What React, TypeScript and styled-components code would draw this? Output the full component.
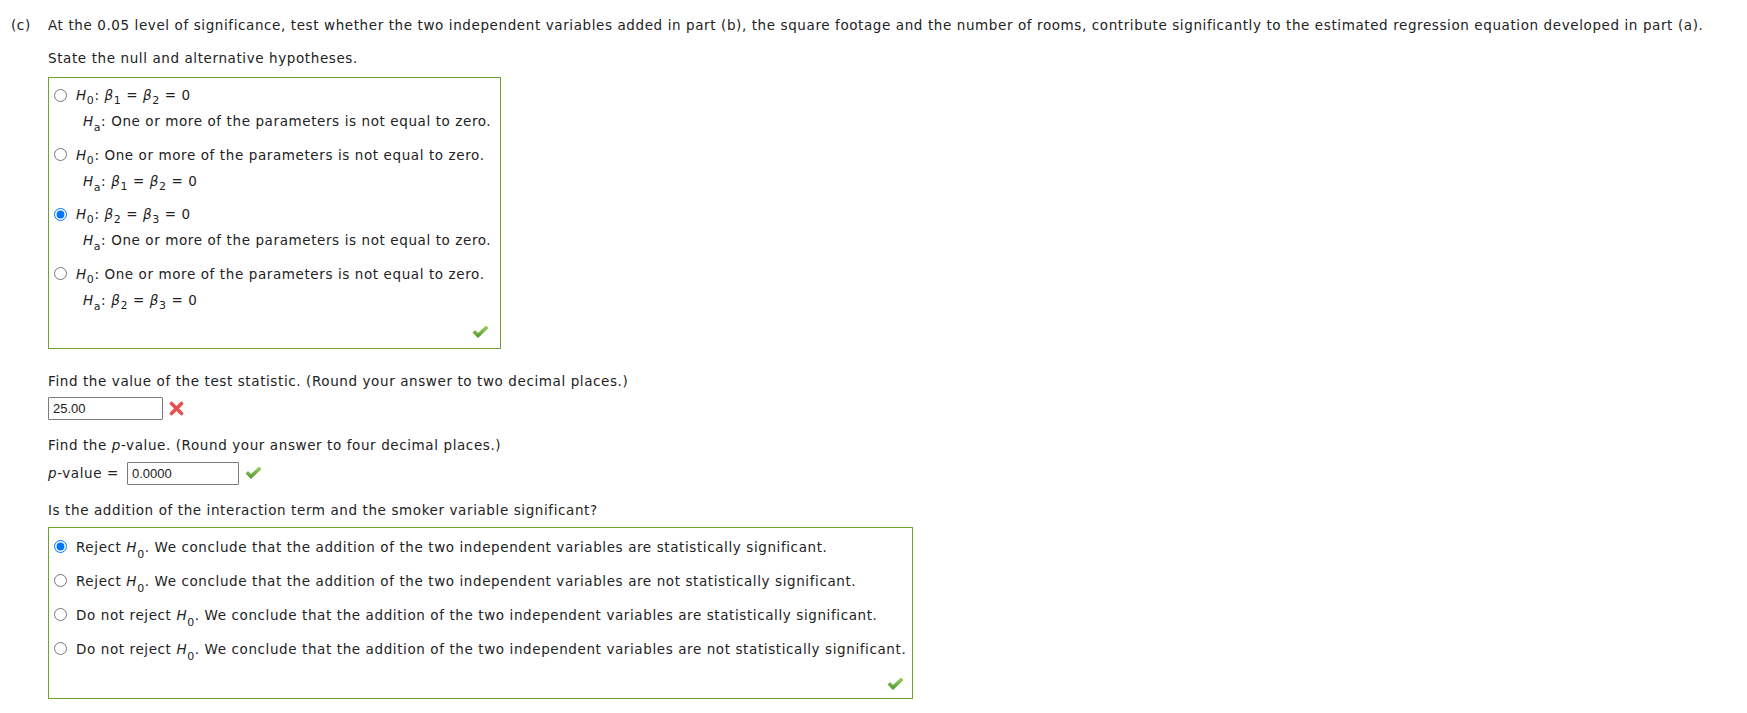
import React from "react";
import styled, { createGlobalStyle } from "styled-components";

const GlobalStyle = createGlobalStyle`
  html, body { margin: 0; padding: 0; background: #fff; }
  body {
    font-family: "DejaVu Sans", Verdana, sans-serif;
    font-size: 13.5px;
    letter-spacing: 0.6px;
    color: #222;
  }
`;

const Page = styled.div`
  display: flex;
  padding: 15px 0 0 11px;
`;

const PartLabel = styled.div`
  width: 37px;
  flex: none;
  line-height: 20px;
`;

const Content = styled.div`
  display: flex;
  flex-direction: column;
  align-items: flex-start;
`;

const Text = styled.div<{ $mt?: number }>`
  line-height: 20px;
  margin-top: ${(p) => p.$mt ?? 0}px;
  white-space: nowrap;
`;

const AnswerBox = styled.div<{ $mt: number; $pt: number; $pr: number }>`
  margin-top: ${(p) => p.$mt}px;
  border: 1px solid #6fa22e;
  display: flex;
  flex-direction: column;
  padding: ${(p) => p.$pt}px ${(p) => p.$pr}px 0 5px;
`;

const Option = styled.label<{ $lh: number; $gap: number }>`
  display: flex;
  align-items: flex-start;
  line-height: ${(p) => p.$lh}px;
  margin-bottom: ${(p) => p.$gap}px;
  white-space: nowrap;
  cursor: pointer;
`;

const Radio = styled.input.attrs({ type: "radio" })<{ $top: number }>`
  width: 13px;
  height: 13px;
  margin: ${(p) => p.$top}px 9px 0 0;
  flex: none;
`;

const Lines = styled.div`
  display: flex;
  flex-direction: column;
`;

const Line = styled.div<{ $indent?: boolean }>`
  padding-left: ${(p) => (p.$indent ? 7 : 0)}px;
`;

const Var = styled.i`
  font-style: italic;
`;

const Sub = styled.sub<{ $drop?: number }>`
  font-size: 11px;
  vertical-align: ${(p) => -(p.$drop ?? 4)}px;
  line-height: 0;
`;

const Footer = styled.div<{ $h: number; $pb: number }>`
  height: ${(p) => p.$h}px;
  display: flex;
  justify-content: flex-end;
  align-items: flex-end;
  padding: 0 2px ${(p) => p.$pb}px 0;
`;

const InputRow = styled.div<{ $mt: number }>`
  margin-top: ${(p) => p.$mt}px;
  display: flex;
  align-items: center;
  gap: 6px;
  line-height: 20px;
`;

const AnswerInput = styled.input<{ $w: number }>`
  width: ${(p) => p.$w}px;
  height: 23px;
  box-sizing: border-box;
  border: 1px solid #7a7a7a;
  border-radius: 1px;
  padding: 0 0 0 4px;
  margin: 0;
  font-family: "Liberation Sans", Arial, sans-serif;
  font-size: 13px;
  letter-spacing: 0;
  color: #222;
  background: #fff;
`;

const PLabel = styled.span`
  margin-right: 2px;
`;

const CheckIcon: React.FC = () => (
  <svg width="17" height="14" viewBox="0 0 17 14" aria-hidden="true">
    <defs>
      <linearGradient id="chk" x1="0" y1="0" x2="0" y2="1">
        <stop offset="0" stopColor="#9fd263" />
        <stop offset="1" stopColor="#4b9629" />
      </linearGradient>
    </defs>
    <polygon points="0.5,7.5 3,5 6,8 14,0.5 16.5,3 6,13" fill="url(#chk)" />
  </svg>
);

const CrossIcon: React.FC = () => (
  <svg width="15" height="15" viewBox="0 0 15 15" aria-hidden="true">
    <g stroke="#ec4f4f" strokeWidth="3.6" strokeLinecap="round">
      <line x1="2.5" y1="2.5" x2="12.5" y2="12.5" />
      <line x1="12.5" y1="2.5" x2="2.5" y2="12.5" />
    </g>
  </svg>
);

const H: React.FC<{ s: string; drop?: number }> = ({ s, drop }) => (
  <>
    <Var>H</Var>
    <Sub $drop={drop}>{s}</Sub>
  </>
);

const B: React.FC<{ s: string }> = ({ s }) => (
  <>
    <Var>β</Var>
    <Sub>{s}</Sub>
  </>
);

const NOT_EQ = "One or more of the parameters is not equal to zero.";

type Hyp = { null: React.ReactNode; alt: React.ReactNode; checked?: boolean };

const hyps: Hyp[] = [
  {
    null: (
      <>
        <H s="0" />: <B s="1" /> = <B s="2" /> = 0
      </>
    ),
    alt: (
      <>
        <H s="a" drop={5} />: {NOT_EQ}
      </>
    ),
  },
  {
    null: (
      <>
        <H s="0" />: {NOT_EQ}
      </>
    ),
    alt: (
      <>
        <H s="a" drop={5} />: <B s="1" /> = <B s="2" /> = 0
      </>
    ),
  },
  {
    null: (
      <>
        <H s="0" />: <B s="2" /> = <B s="3" /> = 0
      </>
    ),
    alt: (
      <>
        <H s="a" drop={5} />: {NOT_EQ}
      </>
    ),
    checked: true,
  },
  {
    null: (
      <>
        <H s="0" />: {NOT_EQ}
      </>
    ),
    alt: (
      <>
        <H s="a" drop={5} />: <B s="2" /> = <B s="3" /> = 0
      </>
    ),
  },
];

const conclusions: { pre: string; post: string; checked?: boolean }[] = [
  {
    pre: "Reject",
    post: "We conclude that the addition of the two independent variables are statistically significant.",
    checked: true,
  },
  {
    pre: "Reject",
    post: "We conclude that the addition of the two independent variables are not statistically significant.",
  },
  {
    pre: "Do not reject",
    post: "We conclude that the addition of the two independent variables are statistically significant.",
  },
  {
    pre: "Do not reject",
    post: "We conclude that the addition of the two independent variables are not statistically significant.",
  },
];

export default function App() {
  return (
    <>
      <GlobalStyle />
      <Page>
        <PartLabel>(c)</PartLabel>
        <Content>
          <Text>
            At the 0.05 level of significance, test whether the two independent variables added in part (b), the square
            footage and the number of rooms, contribute significantly to the estimated regression equation developed in
            part (a).
          </Text>
          <Text $mt={13}>State the null and alternative hypotheses.</Text>
          <AnswerBox $mt={9} $pt={4} $pr={9}>
            {hyps.map((h, i) => (
              <Option key={i} $lh={26} $gap={i === hyps.length - 1 ? 0 : 7.5}>
                <Radio name="hyp" defaultChecked={h.checked} $top={6.5} />
                <Lines>
                  <Line>{h.null}</Line>
                  <Line $indent>{h.alt}</Line>
                </Lines>
              </Option>
            ))}
            <Footer $h={26} $pb={9}>
              <CheckIcon />
            </Footer>
          </AnswerBox>
          <Text $mt={22}>Find the value of the test statistic. (Round your answer to two decimal places.)</Text>
          <InputRow $mt={6}>
            <AnswerInput $w={115} defaultValue="25.00" />
            <CrossIcon />
          </InputRow>
          <Text $mt={15}>
            Find the <Var>p</Var>-value. (Round your answer to four decimal places.)
          </Text>
          <InputRow $mt={7}>
            <PLabel>
              <Var>p</Var>-value =
            </PLabel>
            <AnswerInput $w={112} defaultValue="0.0000" />
            <CheckIcon />
          </InputRow>
          <Text $mt={15}>Is the addition of the interaction term and the smoker variable significant?</Text>
          <AnswerBox $mt={7} $pt={9} $pr={6}>
            {conclusions.map((c, i) => (
              <Option key={i} $lh={20} $gap={i === conclusions.length - 1 ? 0 : 14}>
                <Radio name="concl" defaultChecked={c.checked} $top={3.5} />
                <Lines>
                  <Line>
                    {c.pre} <H s="0" drop={6} />. {c.post}
                  </Line>
                </Lines>
              </Option>
            ))}
            <Footer $h={32} $pb={7}>
              <CheckIcon />
            </Footer>
          </AnswerBox>
        </Content>
      </Page>
    </>
  );
}
